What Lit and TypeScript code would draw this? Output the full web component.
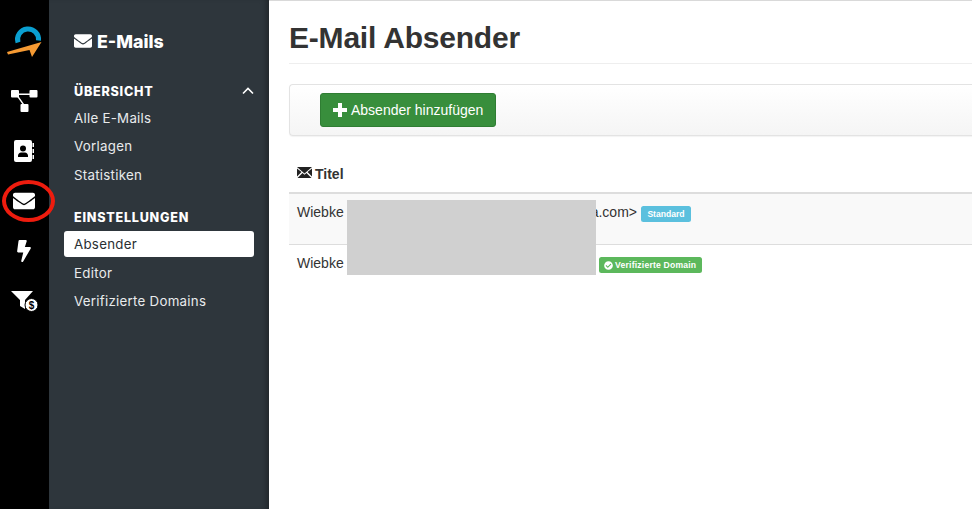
import { LitElement, html, css, svg } from "lit";
import { customElement } from "lit/decorators.js";

const envelope = svg`<path d="M502.3 190.8c3.9-3.1 9.7-.2 9.7 4.7V400c0 26.5-21.5 48-48 48H48c-26.5 0-48-21.5-48-48V195.6c0-5 5.7-7.8 9.7-4.7 22.4 17.4 52.1 39.5 154.1 113.6 21.1 15.4 56.7 47.8 92.2 47.6 35.7.3 72-32.8 92.3-47.6 102-74.1 131.6-96.3 154-113.7zM256 320c23.2.4 56.6-29.2 73.4-41.4 132.7-96.3 142.8-104.7 173.4-128.7 5.8-4.5 9.2-11.5 9.2-18.9v-19c0-26.5-21.5-48-48-48H48C21.5 64 0 85.5 0 112v19c0 7.4 3.4 14.3 9.2 18.9 30.6 23.9 40.7 32.4 173.4 128.7 16.8 12.2 50.2 41.8 73.4 41.4z"/>`;

@customElement("app-root")
export class AppRoot extends LitElement {
  static styles = css`
    :host { display: flex; width: 972px; height: 509px; overflow: hidden; background: #fff; position: relative; font-family: "Liberation Sans", Arial, sans-serif; }
    svg { display: block; fill: currentColor; }
    .rail { width: 49px; flex: none; background: #000; color: #fff; display: flex; flex-direction: column; align-items: center; padding-top: 25px; box-sizing: border-box; position: relative; }
    .rail-item { height: 50px; width: 49px; flex: none; display: flex; align-items: center; justify-content: center; padding-right: 1px; box-sizing: border-box; }
    .logo { height: 51px; align-items: flex-start; padding: 0 0 0 1px; }
    .ring { position: absolute; left: 2px; top: 180px; width: 53px; height: 42px; box-sizing: border-box; border: 4px solid #ee1c0e; border-radius: 50%; z-index: 3; }
    .side { width: 220px; flex: none; background: #2e363c; color: #fff; font-family: Inter, "Open Sans", sans-serif; padding: 29px 15px 0 15px; box-sizing: border-box; box-shadow: inset -6px 0 6px -4px rgba(0,0,0,.35); }
    .brand { display: flex; align-items: center; gap: 5px; height: 24px; padding-left: 10px; font-size: 17.8px; font-weight: 800; margin-bottom: 29px; }
    .sec { display: flex; align-items: center; justify-content: space-between; height: 18px; padding-left: 10px; font-size: 12.6px; font-weight: 800; letter-spacing: .75px; }
    .sec svg { fill: none; stroke: #fff; stroke-width: 1.6; }
    .item { display: flex; align-items: center; height: 26px; border-radius: 3px; padding-left: 10px; font-size: 13.3px; font-weight: 400; letter-spacing: .27px; color: #e9ebec; margin-top: 2.5px; width: 190px; box-sizing: border-box; }
    .group { margin-bottom: 21px; }
    .sec + .item { margin-top: 4.5px; }
    .item.active { background: #fff; color: #2a2f33; }
    .main { flex: 1; min-width: 0; border-top: 1px solid #d9d9d9; padding: 0 0 0 20px; box-sizing: border-box; position: relative; color: #333; }
    h1 { margin: 0; font-size: 30px; line-height: 33px; font-weight: 700; color: #333; padding-top: 20px; padding-bottom: 9px; border-bottom: 1px solid #eee; letter-spacing: -.2px; }
    .toolbar { margin-top: 20px; margin-right: -4px; height: 52px; box-sizing: border-box; border: 1px solid #e3e3e3; border-right: 0; border-radius: 4px 0 0 4px; background: linear-gradient(#fff, #f5f5f5); box-shadow: 0 1px 1px rgba(0,0,0,.05); padding: 8px 0 0 30px; }
    .btn { display: inline-flex; align-items: center; gap: 4px; height: 34px; width: 176px; box-sizing: border-box; padding-left: 12px; background: #388e3c; border: 1px solid #2f7d33; border-radius: 3px; color: #fff; font-size: 14px; }
    .table { position: relative; font-size: 14px; }
    .head { height: 58px; box-sizing: border-box; padding: 30px 0 0 8px; display: flex; align-items: flex-start; gap: 3px; font-weight: 700; border-bottom: 2px solid #ddd; line-height: 16px; color: #333; }
    .head svg { color: #222; }
    .row { box-sizing: border-box; padding: 8px 0 0 8px; line-height: 20px; white-space: nowrap; display: flex; align-items: flex-start; }
    .row.a { height: 51px; background: #f9f9f9; border-bottom: 1px solid #ddd; }
    .gap { display: inline-block; flex: none; }
    .badge { display: inline-flex; align-items: center; gap: 2px; height: 16px; border-radius: 2.5px; color: #fff; font-size: 8.6px; font-weight: 700; margin: 4px 0 0 0; justify-content: center; }
    .info { background: #5bc0de; margin-left: 4px; width: 50px; }
    .ok { background: #5cb85c; margin-left: 3px; width: 103px; letter-spacing: .2px; }
    .mask { position: absolute; left: 58px; top: 64px; width: 249px; height: 75px; background: #d0d0d0; }
  `;

  render() {
    return html`
      <nav class="rail">
        <div class="rail-item logo">
          <svg width="36" height="34" viewBox="0 0 36 34">
            <path d="M11 17.500 A 10.500 10.500 0 1 1 31.500 15.500" fill="none" stroke="#0a9fd0" stroke-width="5"/>
            <path d="M0 27 L34.500 17 L25 32 L22.500 25 L1 29.500 Z" fill="#f59a33"/>
          </svg>
        </div>
        <div class="rail-item">
          <svg width="27" height="22" viewBox="0 0 27 22"><rect x="0" y="0" width="8" height="7.500" rx="1"/><rect x="18.500" y="0" width="8" height="7.500" rx="1"/><rect x="9.500" y="14" width="8" height="8" rx="1"/><path d="M7 3.500h12v1.400H7zM6 6.500l6 8.500 1.200-.8L7 5.500z"/></svg>
        </div>
        <div class="rail-item">
          <svg width="20" height="22" viewBox="0 0 20 22"><path fill-rule="evenodd" d="M2 0h14a2 2 0 0 1 2 2v18a2 2 0 0 1-2 2H2a2 2 0 0 1-2-2V2a2 2 0 0 1 2-2zM9 5.500a3 3 0 1 0 0 6 3 3 0 0 0 0-6zM4 17h10v-1.500c0-1.500-1.500-3-3-3H7c-1.500 0-3 1.500-3 3z"/><rect x="18.500" y="3" width="1.500" height="4"/><rect x="18.500" y="9" width="1.500" height="4"/><rect x="18.500" y="15" width="1.500" height="4"/></svg>
        </div>
        <div class="rail-item">
          <svg width="22" height="22" viewBox="0 0 512 512">${envelope}</svg>
        </div>
        <div class="rail-item">
          <svg width="14" height="22" viewBox="0 0 320 512"><path d="M296 160H180.600l42.600-129.800C227.200 15 215.700 0 200 0H56C44 0 33.800 8.900 32.200 20.800l-32 240C-1.700 275.200 9.500 288 24 288h118.700L96.600 482.500c-3.600 15.200 8 29.500 23.300 29.500 8.400 0 16.400-4.400 20.800-12l176-304c9.300-15.900-2.200-36-20.700-36z"/></svg>
        </div>
        <div class="rail-item">
          <svg width="27" height="22" viewBox="0 0 27 22"><path d="M0 1h22l-8 9v9l-5-3v-6z"/><circle cx="20.500" cy="15" r="6.500" stroke="#000" stroke-width="1"/><text x="20.500" y="18.500" font-size="10" font-weight="700" text-anchor="middle" fill="#000" font-family="Liberation Sans">$</text></svg>
        </div>
      </nav>
      <div class="ring"></div>
      <aside class="side">
        <div class="brand"><svg width="18" height="18" viewBox="0 0 512 512">${envelope}</svg>E-Mails</div>
        <div class="group">
          <div class="sec">ÜBERSICHT
            <svg width="12" height="8" viewBox="0 0 12 8"><path d="M1 6.500 6 1.500l5 5"/></svg>
          </div>
          <div class="item">Alle E-Mails</div>
          <div class="item">Vorlagen</div>
          <div class="item">Statistiken</div>
        </div>
        <div class="group">
          <div class="sec">EINSTELLUNGEN</div>
          <div class="item active">Absender</div>
          <div class="item">Editor</div>
          <div class="item">Verifizierte Domains</div>
        </div>
      </aside>
      <main class="main">
        <h1>E-Mail Absender</h1>
        <div class="toolbar">
          <div class="btn">
            <svg width="14" height="14" viewBox="0 0 14 14"><path d="M5 0h4v5h5v4H9v5H5V9H0V5h5z"/></svg>
            Absender hinzufügen
          </div>
        </div>
        <div class="table">
          <div class="head">
            <svg width="15" height="13" viewBox="0 0 15 13"><path d="M0 1h15L7.500 7.500zM0 2.500 4.500 6 0 10.500zM15 2.500 10.500 6l4.500 4.500zM5.500 7l2 1.800 2-1.800 5 5H.5z"/></svg>
            Titel
          </div>
          <div class="row a">Wiebke <span class="gap" style="width:247px"></span>a.com&gt;<span class="badge info">Standard</span></div>
          <div class="row">Wiebke <span class="gap" style="width:252px"></span><span class="badge ok"><svg width="9" height="9" viewBox="0 0 512 512"><path d="M504 256c0 136.967-111.033 248-248 248S8 392.967 8 256 119.033 8 256 8s248 111.033 248 248zM227.314 387.314l184-184c6.248-6.248 6.248-16.379 0-22.627l-22.627-22.627c-6.248-6.249-16.379-6.249-22.628 0L216 308.118l-70.059-70.059c-6.248-6.248-16.379-6.248-22.628 0l-22.627 22.627c-6.248 6.248-6.248 16.379 0 22.627l104 104c6.249 6.249 16.379 6.249 22.628.001z"/></svg>Verifizierte Domain</span></div>
          <div class="mask"></div>
        </div>
      </main>
    `;
  }
}
